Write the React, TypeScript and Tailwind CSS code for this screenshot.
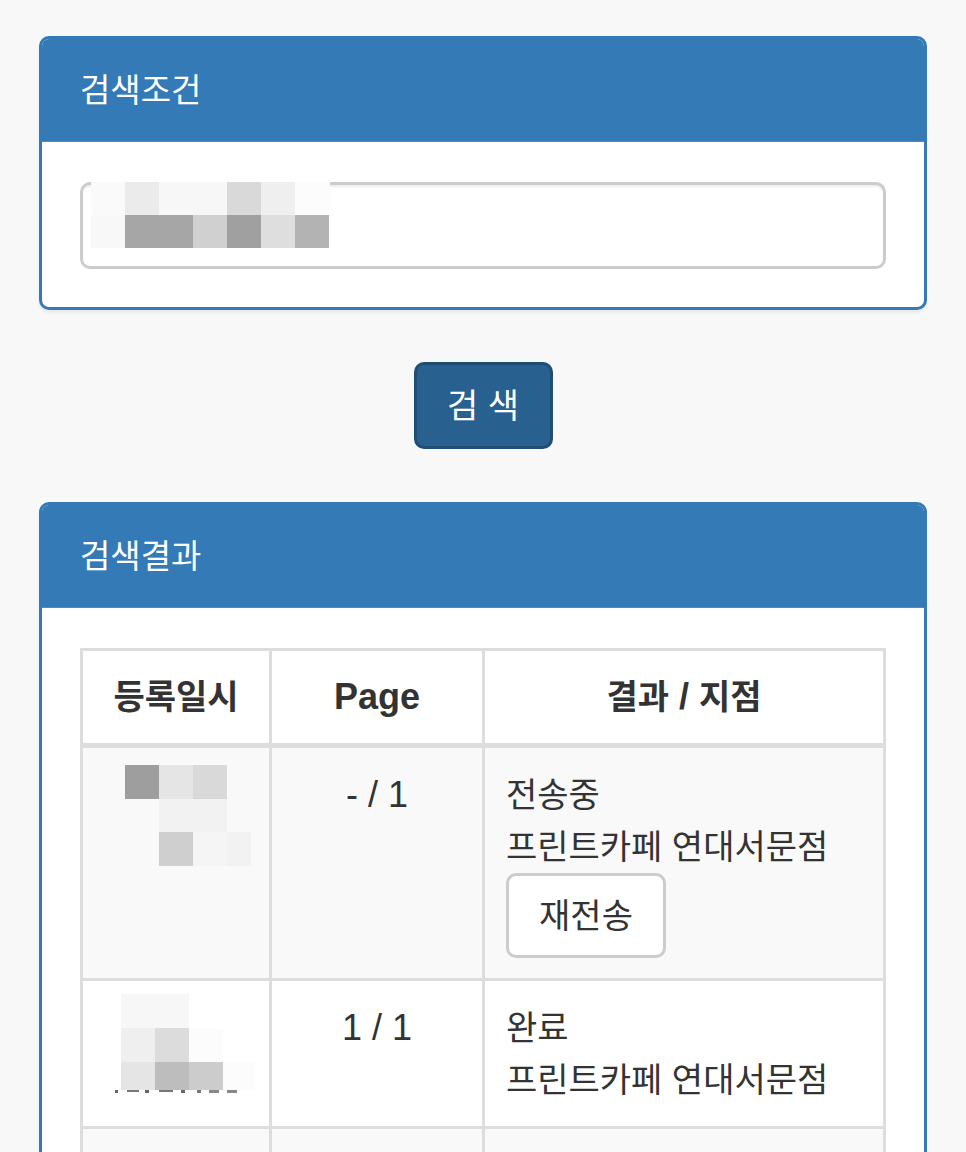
import React from 'react';

type Block = [number, number, number, number, string];

// blurred (mosaic) values as they appear in the capture
const inputMosaic: Block[] = [
  [0, 0, 34, 33, '#fafafa'],
  [34, 0, 34, 33, '#ebebeb'],
  [68, 0, 68, 33, '#f7f7f7'],
  [136, 0, 34, 33, '#d9d9d9'],
  [170, 0, 34, 33, '#efefef'],
  [204, 0, 35, 33, '#fcfcfc'],
  [0, 33, 34, 33, '#f8f8f8'],
  [34, 33, 68, 33, '#a6a6a6'],
  [102, 33, 34, 33, '#d0d0d0'],
  [136, 33, 34, 33, '#a0a0a0'],
  [170, 33, 34, 33, '#dedede'],
  [204, 33, 34, 33, '#b3b3b3'],
];

const dateMosaic1: Block[] = [
  [0, 0, 34, 34, '#9e9e9e'],
  [34, 0, 34, 34, '#e5e5e5'],
  [68, 0, 34, 34, '#d9d9d9'],
  [34, 34, 34, 33, '#f2f2f2'],
  [68, 34, 34, 33, '#f2f2f2'],
  [34, 67, 34, 34, '#cfcfcf'],
  [68, 67, 34, 34, '#f5f5f5'],
  [102, 67, 24, 34, '#f2f2f2'],
];

const dateMosaic2: Block[] = [
  [0, 0, 34, 34, '#f7f7f7'],
  [34, 0, 34, 34, '#f7f7f7'],
  [0, 34, 34, 34, '#efefef'],
  [34, 34, 34, 34, '#dcdcdc'],
  [68, 34, 34, 34, '#fcfcfc'],
  [0, 68, 34, 28, '#e5e5e5'],
  [34, 68, 34, 28, '#bdbdbd'],
  [68, 68, 34, 28, '#cccccc'],
  [102, 68, 32, 28, '#fcfcfc'],
  // bits of the time text peeking under the blur
  [-6, 96, 3, 3, '#666666'],
  [6, 96, 12, 2, '#777777'],
  [24, 96, 4, 3, '#666666'],
  [38, 96, 14, 2, '#777777'],
  [60, 96, 4, 3, '#666666'],
  [76, 96, 4, 3, '#777777'],
  [88, 96, 10, 3, '#888888'],
  [106, 96, 10, 3, '#888888'],
];

function Mosaic({ blocks, w, h, className }: { blocks: Block[]; w: number; h: number; className?: string }) {
  return (
    <svg width={w} height={h} viewBox={`0 0 ${w} ${h}`} overflow="visible" className={className}>
      {blocks.map(([x, y, bw, bh, c], i) => (
        <rect key={i} x={x} y={y} width={bw} height={bh} fill={c} />
      ))}
    </svg>
  );
}

function Panel({ title, children }: { title: string; children: React.ReactNode }) {
  return (
    <section className="rounded-[10px] border-[3px] border-[#337ab7] bg-white shadow-[0_3px_3px_rgba(0,0,0,0.05)] overflow-hidden">
      <div className="bg-[#337ab7] border-b border-[#4a8cc4] px-[38px] pt-[26px] pb-[25px] text-white text-[33px] leading-[51px]">
        {title}
      </div>
      {children}
    </section>
  );
}

// hangul runs a touch smaller than the latin text, like the original font
const ko = 'text-[34px]';

type Row = {
  mosaic?: { blocks: Block[]; ml: string; mt: string };
  page?: string;
  status?: string;
  store?: string;
  resend?: boolean;
};

const rows: Row[] = [
  {
    mosaic: { blocks: dateMosaic1, ml: 'ml-[21px]', mt: '-mt-[4px]' },
    page: '- / 1',
    status: '전송중',
    store: '프린트카페 연대서문점',
    resend: true,
  },
  {
    mosaic: { blocks: dateMosaic2, ml: 'ml-[17px]', mt: '-mt-[8px]' },
    page: '1 / 1',
    status: '완료',
    store: '프린트카페 연대서문점',
  },
  {},
];

export default function App() {
  return (
    <div
      className="min-h-screen bg-[#f8f8f8] text-[#333] px-[39px] pt-[36px] pb-[60px]"
      style={{ fontFamily: '"Liberation Sans", Arial, "Noto Sans CJK KR", sans-serif' }}
    >
      <Panel title="검색조건">
        <div className="px-[38px] pt-[40px] pb-[38px]">
          <div className="relative h-[87px] rounded-[10px] border-[3px] border-[#cccccc] bg-white shadow-[inset_0_2px_2px_rgba(0,0,0,0.075)]">
            <Mosaic blocks={inputMosaic} w={239} h={66} className="absolute left-[8px] -top-[3px]" />
          </div>
        </div>
      </Panel>

      <div className="flex justify-center mt-[52px] mb-[53px]">
        <button className="h-[87px] w-[139px] rounded-[10px] border-[3px] border-[#204d74] bg-[#286090] text-white text-[34px] leading-[52px]">
          검 색
        </button>
      </div>

      <Panel title="검색결과">
        <div className="px-[38px] pt-[40px] pb-[40px]">
          <div className="grid grid-cols-[192px_213px_401px] text-[36px] leading-[52px]">
            {/* header */}
            <div className="border-x-[3px] border-t-[3px] border-b-[5px] border-[#dddddd] py-[20px] text-center font-bold">
              <span className={ko}>등록일시</span>
            </div>
            <div className="border-r-[3px] border-t-[3px] border-b-[5px] border-[#dddddd] py-[20px] text-center font-bold">
              Page
            </div>
            <div className="border-r-[3px] border-t-[3px] border-b-[5px] border-[#dddddd] py-[20px] text-center font-bold">
              <span className={ko}>결과</span> / <span className={ko}>지점</span>
            </div>

            {rows.map((r, i) => {
              const bg = i % 2 === 0 ? 'bg-[#f9f9f9]' : 'bg-white';
              const cell = `${bg} border-b-[3px] border-[#dddddd] px-[21px] pt-[21px] pb-[20px] min-h-[145px]`;
              return (
                <React.Fragment key={i}>
                  <div className={`${cell} border-x-[3px]`}>
                    {r.mosaic && (
                      <Mosaic
                        blocks={r.mosaic.blocks}
                        w={130}
                        h={100}
                        className={`block ${r.mosaic.ml} ${r.mosaic.mt}`}
                      />
                    )}
                  </div>
                  <div className={`${cell} border-r-[3px] text-center`}>{r.page}</div>
                  <div className={`${cell} border-r-[3px]`}>
                    {r.status && <div className={ko}>{r.status}</div>}
                    {r.store && <div className={ko}>{r.store}</div>}
                    {r.resend && (
                      <button className="h-[85px] w-[160px] rounded-[10px] border-[3px] border-[#cccccc] bg-white text-[34px] leading-[52px] text-[#333]">
                        재전송
                      </button>
                    )}
                  </div>
                </React.Fragment>
              );
            })}
          </div>
        </div>
      </Panel>
    </div>
  );
}
